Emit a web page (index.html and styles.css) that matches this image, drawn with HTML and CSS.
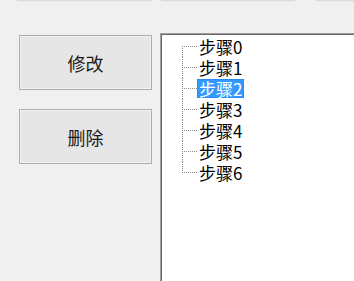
FILE: index.html
```html
<!DOCTYPE html>
<html>
<head>
<meta charset="utf-8">
<link rel="stylesheet" href="styles.css">
</head>
<body>
<div class="topstrip">
  <div class="seg seg1"></div>
  <div class="seg seg2"></div>
  <div class="seg seg3"></div>
</div>
<div class="main">
  <div class="buttons">
    <div class="btn">修改</div>
    <div class="btn">删除</div>
  </div>
  <div class="tree">
    <ul class="items">
      <li class="row first"><span class="conn"></span><span class="label">步骤0</span></li>
      <li class="row"><span class="conn"></span><span class="label">步骤1</span></li>
      <li class="row"><span class="conn"></span><span class="label sel">步骤2</span></li>
      <li class="row"><span class="conn"></span><span class="label">步骤3</span></li>
      <li class="row"><span class="conn"></span><span class="label">步骤4</span></li>
      <li class="row"><span class="conn"></span><span class="label">步骤5</span></li>
      <li class="row last"><span class="conn"></span><span class="label">步骤6</span></li>
    </ul>
  </div>
</div>
</body>
</html>
```
FILE: styles.css
```css
html, body {
  margin: 0;
  padding: 0;
}
body {
  width: 354px;
  height: 281px;
  overflow: hidden;
  background: #f0f0f0;
  font-family: "Noto Sans CJK SC", "Noto Sans", sans-serif;
  color: #000;
}
.topstrip {
  display: flex;
  height: 2px;
}
.seg {
  height: 1px;
  border-bottom: 1px solid #ebebeb;
  background: #dadada;
}
.seg1 { margin-left: 17px; width: 135px; }
.seg2 { margin-left: 9px; width: 134px; }
.seg3 { margin-left: 21px; flex: 1; }
.main {
  display: flex;
  align-items: flex-start;
  margin-top: 31px;
  padding-left: 19px;
}
.buttons {
  display: flex;
  flex-direction: column;
  gap: 19px;
  margin-top: 2px;
}
.btn {
  width: 131px;
  height: 53px;
  border: 1px solid #adadad;
  box-shadow: inset 0 0 0 1px #f2f2f2;
  background: #e6e6e6;
  display: flex;
  align-items: center;
  justify-content: center;
  font-size: 18px;
  color: #1a1a1a;
}
.tree {
  margin-left: 8px;
  width: 200px;
  height: 260px;
  background: #fff;
  border-top: 1px solid #a0a0a0;
  border-left: 1px solid #a0a0a0;
  box-shadow: inset 1px 1px 0 #696969;
  box-sizing: border-box;
  padding-top: 2px;
}
.items {
  list-style: none;
  margin: 0;
  padding: 0;
}
.row {
  position: relative;
  height: 21px;
  display: flex;
  align-items: center;
  font-size: 17px;
}
.row::before {
  content: "";
  position: absolute;
  left: 21px;
  top: 0;
  bottom: 0;
  border-left: 1px dotted #8a8a8a;
}
.row.first::before { top: 10px; }
.row.last::before { bottom: 10px; }
.conn {
  margin-left: 21px;
  width: 15px;
  height: 0;
  border-top: 1px dotted #8a8a8a;
}
.label {
  line-height: 17px;
  height: 17px;
  padding: 0 1px;
  border: 1px solid transparent;
}
.label.sel {
  background: #3399ff;
  color: #fff;
  border: 1px dotted #b05a20;
}
```
